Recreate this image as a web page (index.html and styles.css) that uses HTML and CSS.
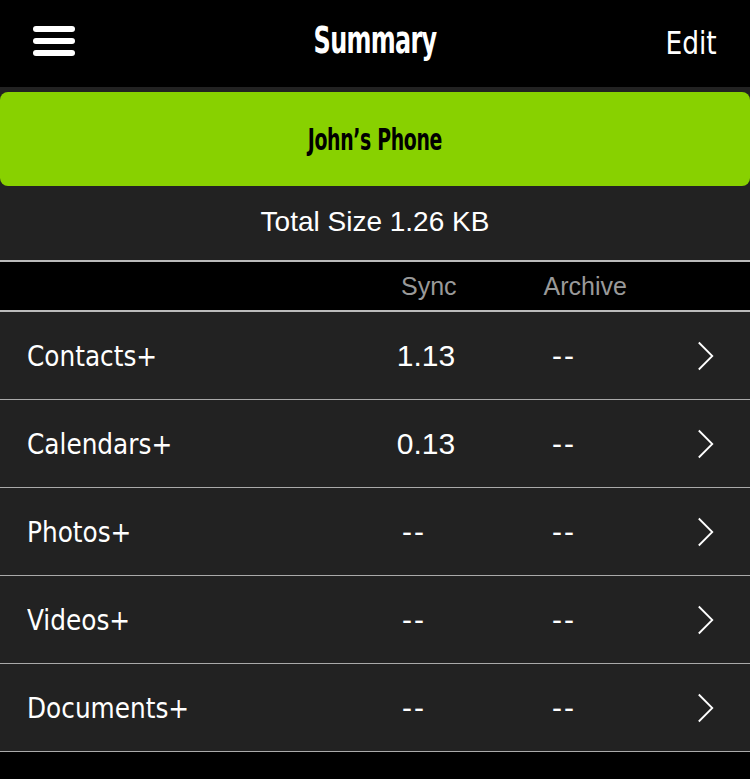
FILE: index.html
```html
<!DOCTYPE html>
<html>
<head>
<meta charset="utf-8">
<link rel="stylesheet" href="styles.css">
</head>
<body>
<div class="app">
  <header class="topbar">
    <div class="menu" aria-label="Menu"><span></span><span></span><span></span></div>
    <h1 class="title">Summary</h1>
    <div class="edit">Edit</div>
  </header>
  <main class="content">
    <div class="device"><span class="device-name">John’s Phone</span></div>
    <div class="total">Total Size 1.26 KB</div>
    <div class="colhead">
      <span class="h-sync">Sync</span>
      <span class="h-archive">Archive</span>
    </div>
    <ul class="list">
      <li class="row"><span class="label">Contacts+</span><span class="sync">1.13</span><span class="archive">--</span><svg class="chev" viewBox="0 0 20 32"><path d="M2 1 L17 16 L2 31" /></svg></li>
      <li class="row"><span class="label">Calendars+</span><span class="sync">0.13</span><span class="archive">--</span><svg class="chev" viewBox="0 0 20 32"><path d="M2 1 L17 16 L2 31" /></svg></li>
      <li class="row"><span class="label">Photos+</span><span class="sync dash">--</span><span class="archive">--</span><svg class="chev" viewBox="0 0 20 32"><path d="M2 1 L17 16 L2 31" /></svg></li>
      <li class="row"><span class="label">Videos+</span><span class="sync dash">--</span><span class="archive">--</span><svg class="chev" viewBox="0 0 20 32"><path d="M2 1 L17 16 L2 31" /></svg></li>
      <li class="row"><span class="label">Documents+</span><span class="sync dash">--</span><span class="archive">--</span><svg class="chev" viewBox="0 0 20 32"><path d="M2 1 L17 16 L2 31" /></svg></li>
    </ul>
  </main>
</div>
</body>
</html>
```

FILE: styles.css
```css
html, body {
  margin: 0;
  padding: 0;
  background: #000;
}
.app {
  width: 750px;
  height: 779px;
  background: #000;
  color: #fff;
  font-family: "Liberation Sans", Arial, sans-serif;
  overflow: hidden;
}
.topbar {
  height: 87px;
  display: flex;
  align-items: center;
  justify-content: space-between;
  padding: 0 33px;
  position: relative;
  box-sizing: border-box;
}
.menu {
  width: 42px;
  display: flex;
  flex-direction: column;
  gap: 6px;
  margin-top: -6px;
}
.menu span {
  display: block;
  height: 6px;
  border-radius: 3px;
  background: #fff;
}
.title {
  position: absolute;
  left: 0;
  right: 0;
  top: 18px;
  margin: 0;
  text-align: center;
  font-family: "DejaVu Sans Condensed", "DejaVu Sans", sans-serif;
  font-weight: bold;
  font-size: 38px;
  letter-spacing: -1px;
  transform: scaleX(0.7);
  pointer-events: none;
}
.edit {
  font-family: "DejaVu Sans Condensed", "DejaVu Sans", sans-serif;
  font-size: 32px;
  margin-right: 0;
  margin-top: -2px;
  transform: scaleX(0.92);
  transform-origin: right center;
}
.content {
  background: #222;
  padding-top: 5px;
}
.device {
  height: 94px;
  background: #88d100;
  border-radius: 8px;
  display: flex;
  align-items: center;
  justify-content: center;
}
.device-name {
  color: #000;
  font-family: "DejaVu Sans Condensed", "DejaVu Sans", sans-serif;
  font-weight: bold;
  font-size: 30px;
  letter-spacing: -0.5px;
  transform: scaleX(0.7);
}
.total {
  display: flex;
  align-items: center;
  justify-content: center;
  font-size: 28px;
  border-bottom: 2px solid #bbb;
  padding-bottom: 2px;
  box-sizing: border-box;
  height: 76px;
}
.colhead {
  height: 48px;
  background: #000;
  border-bottom: 2px solid #bbb;
  display: flex;
  align-items: center;
  color: #999;
  font-size: 25px;
}
.h-sync {
  margin-left: 401px;
}
.h-archive {
  margin-left: 87px;
}
.list {
  list-style: none;
  margin: 0;
  padding: 0;
}
.row {
  height: 87px;
  border-bottom: 1px solid #aaa;
  display: flex;
  align-items: center;
  padding-left: 27px;
}
.label {
  width: 339px;
  font-family: "DejaVu Sans Condensed", "DejaVu Sans", sans-serif;
  font-size: 29px;
  transform: scaleX(0.95);
  transform-origin: left center;
  white-space: nowrap;
}
.sync {
  width: 120px;
  text-align: center;
  font-size: 30px;
}
.sync.dash {
  padding-right: 24px;
  box-sizing: border-box;
  letter-spacing: 2px;
}
.archive {
  width: 80px;
  margin-left: 38px;
  text-align: center;
  font-size: 30px;
  letter-spacing: 2px;
}
.chev {
  width: 18px;
  height: 30px;
  margin-left: 93px;
  fill: none;
  stroke: #fff;
  stroke-width: 2;
}
```
